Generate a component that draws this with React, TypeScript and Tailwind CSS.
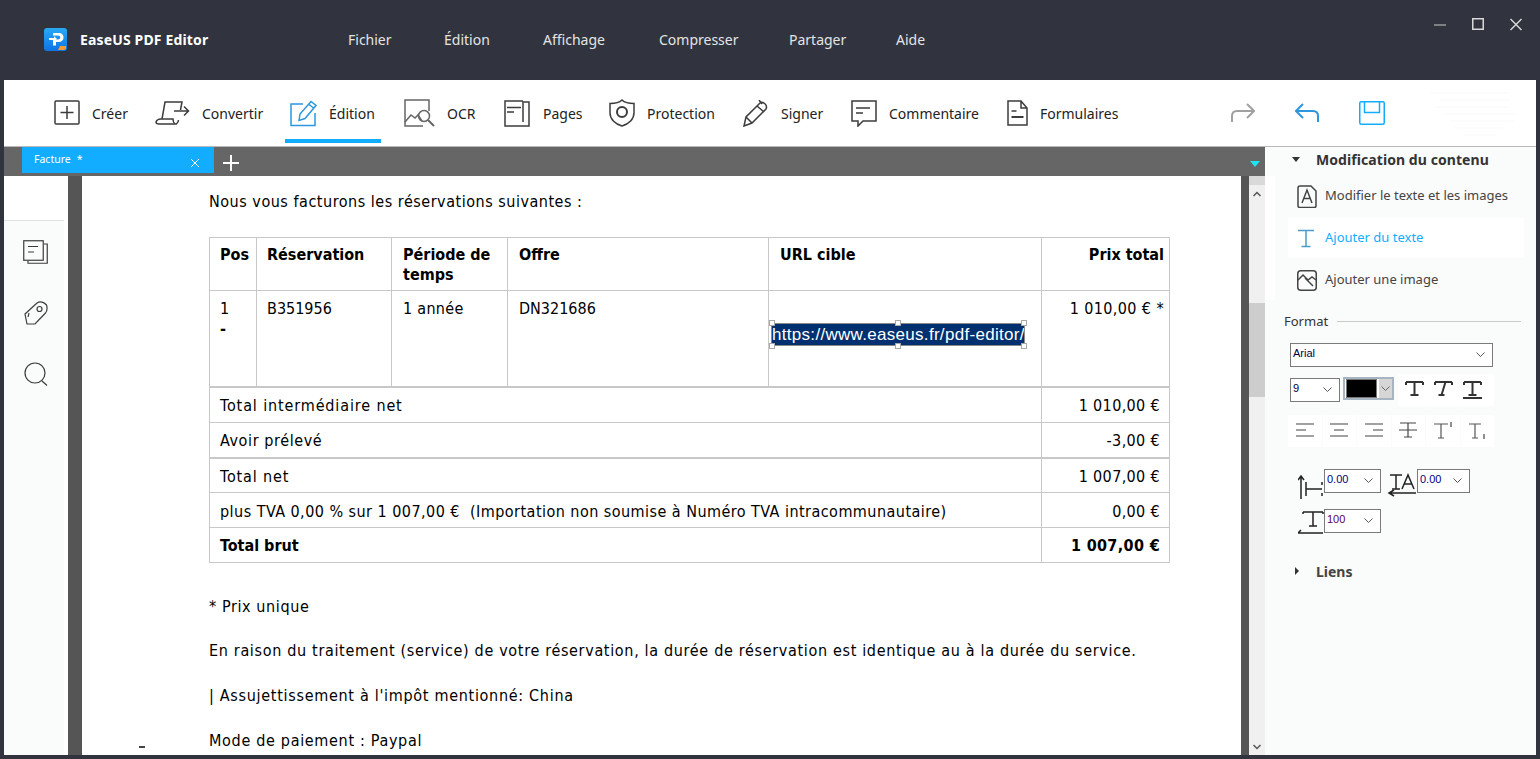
import type { ReactNode } from "react";

const ui = "font-['Noto_Sans','Open_Sans',sans-serif]";
const docFont = "font-['DejaVu_Sans_Condensed','DejaVu_Sans',sans-serif]";

function Glyph({
  w,
  h,
  color = "#3c3c3c",
  width = 1.5,
  children,
}: {
  w: number;
  h: number;
  color?: string;
  width?: number;
  children: ReactNode;
}) {
  return (
    <svg
      width={w}
      height={h}
      viewBox={`0 0 ${w} ${h}`}
      fill="none"
      stroke={color}
      strokeWidth={width}
      className="block shrink-0"
    >
      {children}
    </svg>
  );
}

const toolbarItems = [
  {
    label: "Créer",
    textClass: "w-[35px]",
    icon: (
      <Glyph w={26} h={26}>
        <rect x="1" y="1" width="24" height="23" rx="1" />
        <path d="M13 6v13M6.5 12.5h13" />
      </Glyph>
    ),
  },
  {
    label: "Convertir",
    textClass: "w-[60px]",
    icon: (
      <Glyph w={35} h={26}>
        <path d="M7 19 10 2h17l-1.5 8M1 22c1-3 3-3 5-3h12c0 2 .5 4 2 5H4c-2 0-3-1-3-2ZM20 24c2 0 3-1 3.5-4" />
        <path d="M19 11h14M29 6.5l4.5 4.5-4.5 4.5" />
      </Glyph>
    ),
  },
  {
    label: "Édition",
    textClass: "w-[47px]",
    active: true,
    icon: (
      <Glyph w={27} h={28} color="#2c97de">
        <path d="M13 5H1v21.5h24V14" />
        <path d="M9 21.5 10 15 21 2.5 26 6.5 15 19.5ZM18.5 5l5 4" />
      </Glyph>
    ),
  },
  {
    label: "OCR",
    textClass: "w-[29px]",
    icon: (
      <Glyph w={31} h={29} color="#666666">
        <path d="M19 27H1V1h24v11" />
        <path d="M1 23 7 16l4 3 3-3 4 6" />
        <circle cx="20" cy="17" r="5.5" />
        <path d="m24 21 6 6" strokeWidth="2" />
      </Glyph>
    ),
  },
  {
    label: "Pages",
    textClass: "w-[38px]",
    icon: (
      <Glyph w={27} h={27}>
        <path d="M19 1H1v25h24V2h-6v20" />
        <path d="M3 7.5h14M3 12h7" />
      </Glyph>
    ),
  },
  {
    label: "Protection",
    textClass: "w-[68px]",
    icon: (
      <Glyph w={26} h={28}>
        <path d="M13 1c3 3 7 3.500 12 3.500V14c0 6-5 11-12 13C6 25 1 20 1 14V4.500C6 4.500 10 4 13 1Z" />
        <circle cx="13" cy="13" r="5" strokeWidth="2" />
      </Glyph>
    ),
  },
  {
    label: "Signer",
    textClass: "w-[42px]",
    icon: (
      <Glyph w={26} h={27}>
        <path d="M1 26 3 17 17 3c3-2 8 2 6 6L9 23Z" />
        <path d="M14 6l7 6M3 17l6 6M16 0l3 4" />
      </Glyph>
    ),
  },
  {
    label: "Commentaire",
    textClass: "w-[90px]",
    icon: (
      <Glyph w={26} h={27}>
        <path d="M1 1h24v20H12l-5 5v-5H1Z" />
        <path d="M5 8h14M5 13h7" />
      </Glyph>
    ),
  },
  {
    label: "Formulaires",
    textClass: "w-[77px]",
    icon: (
      <Glyph w={21} h={26}>
        <path d="M1 1h13l6 7v17H1ZM14 1v7h6" />
        <path d="M4.500 11h5" />
        <path d="M4.500 17h12" strokeWidth="2" />
      </Glyph>
    ),
  },
];

function ToolbarButton({
  label,
  icon,
  textClass,
  active,
}: {
  label: string;
  icon: ReactNode;
  textClass: string;
  active?: boolean;
}) {
  return (
    <div
      className={`flex items-center gap-3 px-[5px] pt-[7px] h-[63px] border-b-4 ${
        active ? "border-[#13adff]" : "border-transparent"
      }`}
    >
      {icon}
      <span className={`${textClass} whitespace-nowrap text-[14px] text-[#222]`}>
        {label}
      </span>
    </div>
  );
}

const menuItems = [
  { label: "Fichier", width: "w-[96px]" },
  { label: "Édition", width: "w-[99px]" },
  { label: "Affichage", width: "w-[116px]" },
  { label: "Compresser", width: "w-[130px]" },
  { label: "Partager", width: "w-[107px]" },
  { label: "Aide", width: "w-[30px]" },
];

function TitleBar() {
  return (
    <header className="h-20 shrink-0 flex items-start">
      <div className="ml-10 mt-7 flex items-center w-[304px]">
        <svg width="23" height="23" viewBox="0 0 23 23" className="block shrink-0">
          <defs>
            <linearGradient id="logoBlue" x1="0" y1="0" x2="0" y2="1">
              <stop offset="0" stopColor="#29a9f4" />
              <stop offset="1" stopColor="#0d74e4" />
            </linearGradient>
          </defs>
          <rect width="23" height="23" rx="3" fill="url(#logoBlue)" />
          <path
            d="M9 5h5.500c3.500 0 5 2 5 4.500S17.500 14 14.500 14H12v3.500H9v-6h5c1.500 0 2.300-.8 2.300-2s-.8-2-2.300-2H9Z"
            fill="#fff"
          />
          <path d="M5 10h5V8l3 3-3 3v-2H5Z" fill="#fff" />
          <path d="M14 22l2-4h6v2c0 1-1 2-2 2Z" fill="#f59a35" />
        </svg>
        <span className="ml-[13px] text-[14px] tracking-[0.15px] font-bold text-white whitespace-nowrap">
          EaseUS PDF Editor
        </span>
      </div>
      <nav className="mt-[29px] flex text-[14px] leading-[21px] text-[#e4e4e4]">
        {menuItems.map((m) => (
          <span key={m.label} className={`whitespace-nowrap ${m.width}`}>
            {m.label}
          </span>
        ))}
      </nav>
      <div className="ml-auto mr-[14px] mt-[18px] flex gap-[26px]">
        <Glyph w={12} h={13} color="#9a9a9a">
          <path d="M0 7h12" />
        </Glyph>
        <Glyph w={12} h={13} color="#d8d8d8">
          <rect x=".75" y=".75" width="10.500" height="10.500" />
        </Glyph>
        <Glyph w={12} h={13} color="#d8d8d8">
          <path d="M.5 1l11 11M11.500 1 .5 12" />
        </Glyph>
      </div>
    </header>
  );
}

function Toolbar() {
  return (
    <div className="h-[67px] shrink-0 border-b border-[#b9b9b9] bg-white flex items-start pl-[45px] pr-[17px]">
      <div className="flex gap-[18px]">
        {toolbarItems.map((item) => (
          <ToolbarButton key={item.label} {...item} />
        ))}
      </div>
      <div className="ml-auto mt-[21px] flex gap-[40px] items-start">
        <Glyph w={24} h={22} color="#a0a0a0" width={2}>
          <path d="M1 21v-6c0-3 2-5 5-5h16M16 3l7 7-7 7" />
        </Glyph>
        <Glyph w={24} h={22} color="#2c97de" width={2}>
          <path d="M23 21v-6c0-3-2-5-5-5H2M8 3 1 10l7 7" />
        </Glyph>
        <Glyph w={26} h={24} color="#13adff" width={1.5}>
          <rect x=".75" y=".75" width="24.500" height="22.500" rx="1.500" />
          <path d="M5.500 1v10.500h15V1" />
        </Glyph>
        <svg width="99" height="46" viewBox="0 0 99 46" className="-ml-[5px] -mt-[10px]" fill="none" stroke="#f9f9f9">
          <path d="M10 2h80M20 9h70M15 16h75M25 23h70M30 30h65M35 37h50M45 44h30" />
        </svg>
      </div>
    </div>
  );
}

function TabBar() {
  return (
    <div className="h-[29px] shrink-0 bg-[#666666] flex items-start pl-[18px] relative">
      <div
        className={`w-[192px] h-[26px] bg-[#13adff] flex items-center pl-3 pr-[14px] text-white text-[10.5px] ${ui}`}
      >
        <span>Facture</span>
        <span className="ml-[6px]">*</span>
        <svg width="10" height="10" viewBox="0 0 10 10" className="ml-auto mt-[5px]" stroke="#fff">
          <path d="M1 1l8 8M9 1 1 9" />
        </svg>
      </div>
      <svg width="16" height="16" viewBox="0 0 16 16" className="ml-[9px] mt-[8px]" stroke="#fff" strokeWidth="2">
        <path d="M8 0v16M0 8h16" />
      </svg>
      <span className="ml-auto mr-[5px] mt-[14px] w-0 h-0 border-x-[5px] border-x-transparent border-t-[6px] border-t-[#1ee5f5]" />
    </div>
  );
}

function LeftRail() {
  return (
    <aside className="w-[60px] shrink-0 flex flex-col">
      <div className="h-[45px] shrink-0 bg-white border-b border-[#e2e2e2]" />
      <div className="flex-1 bg-[#fafbfb] flex flex-col items-center gap-[37px] pt-[19px] pl-[3px]">
        <Glyph w={25} h={24} width={1.2}>
          <rect x=".75" y=".75" width="19.500" height="19.500" fill="#fafbfb" />
          <path d="M21 4h3.250v19.250H5V21M5 6.500h10M5 12h6" />
        </Glyph>
        <Glyph w={24} h={24} width={1.2}>
          <path d="M1 13 13 2c3-2 7-1 9.500 2 1 3 .5 6-1 8L11 23H3Z" />
          <circle cx="15.500" cy="8" r="2.500" />
          <path d="M5 12l-1 4" />
        </Glyph>
        <Glyph w={24} h={24} width={1.2}>
          <circle cx="11" cy="11" r="10" />
          <path d="m18 19 5 4.500" />
        </Glyph>
      </div>
    </aside>
  );
}

function Handle({ pos }: { pos: string }) {
  return (
    <span className={`absolute w-[6px] h-[6px] bg-white border border-[#a8a8a8] ${pos}`} />
  );
}

const summaryRows = [
  {
    label: "Total intermédiaire net",
    value: "1 010,00 €",
    rowClass: "h-[36px] [&>td]:border-t-2 [&>td]:pt-[3px]",
    spacing: "tracking-[0.87px]",
  },
  {
    label: "Avoir prélevé",
    value: "-3,00 €",
    rowClass: "h-[35px] [&>td]:pt-[2px]",
    spacing: "tracking-[0.6px]",
  },
  {
    label: "Total net",
    value: "1 007,00 €",
    rowClass: "h-[35px] [&>td]:border-t-2 [&>td]:pt-[3px]",
    spacing: "tracking-[0.85px]",
  },
  {
    label: "plus TVA 0,00 % sur 1 007,00 €  (Importation non soumise à Numéro TVA intracommunautaire)",
    value: "0,00 €",
    rowClass: "h-[35px] [&>td]:pt-[3px]",
    spacing: "tracking-[0.46px]",
  },
  {
    label: "Total brut",
    value: "1 007,00 €",
    rowClass: "h-[35px] font-bold [&>td]:pt-[1px]",
    spacing: "",
  },
];

function InvoiceTable() {
  const cell = "border border-[#c8c8c8] align-top px-[10px]";
  const shifted = "border border-[#c8c8c8] align-top pl-[11px] pr-[8px]";
  const sum = "border border-[#c8c8c8] align-middle whitespace-pre";
  return (
    <table className="table-fixed border-collapse w-[960px] mt-[25px] text-[16px] leading-[20px]">
      <colgroup>
        <col className="w-[47px]" />
        <col className="w-[135px]" />
        <col className="w-[116px]" />
        <col className="w-[261px]" />
        <col className="w-[273px]" />
        <col className="w-[128px]" />
      </colgroup>
      <tbody>
        <tr className="h-[53px] font-bold [&>td]:pt-[7px]">
          <td className={cell}>Pos</td>
          <td className={cell}>Réservation</td>
          <td className={shifted}>Période de temps</td>
          <td className={shifted}>Offre</td>
          <td className={shifted}>URL cible</td>
          <td className={`${cell} text-right !pr-[5px]`}>Prix total</td>
        </tr>
        <tr className="h-[96px] [&>td]:pt-[8px]">
          <td className={cell}>
            1
            <br />
            <span className="font-bold">-</span>
          </td>
          <td className={cell}>B351956</td>
          <td className={`${shifted} tracking-[0.3px]`}>1 année</td>
          <td className={shifted}>DN321686</td>
          <td className="border border-[#c8c8c8] align-top">
            <div className="relative mt-[25px] ml-[3px] w-[252px] h-[21px] bg-[#003070] outline outline-[#8a8a8a] text-white text-[17px] tracking-[0.3px] leading-[21px] font-['Liberation_Sans',Arial,sans-serif] whitespace-nowrap">
              https://www.easeus.fr/pdf-editor/
              <Handle pos="-left-[3px] -top-[4px]" />
              <Handle pos="left-[123px] -top-[4px]" />
              <Handle pos="-right-[3px] -top-[4px]" />
              <Handle pos="-left-[3px] -bottom-[4px]" />
              <Handle pos="left-[123px] -bottom-[4px]" />
              <Handle pos="-right-[3px] -bottom-[4px]" />
            </div>
          </td>
          <td className={`${cell} text-right !pr-[5px] tracking-[0.4px]`}>1 010,00 € *</td>
        </tr>
        {summaryRows.map((row) => (
          <tr key={row.label} className={row.rowClass}>
            <td colSpan={5} className={`${sum} pl-[10px] ${row.spacing}`}>
              {row.label}
            </td>
            <td className={`${sum} text-right pr-[9px] tracking-[0.35px]`}>{row.value}</td>
          </tr>
        ))}
      </tbody>
    </table>
  );
}

function DocumentPage() {
  return (
    <div
      className={`relative w-[1159px] shrink-0 bg-white overflow-hidden pl-[127px] pt-[16px] text-[16px] leading-[20px] text-black ${docFont}`}
    >
      <p className="tracking-[0.52px]">Nous vous facturons les réservations suivantes :</p>
      <InvoiceTable />
      <p className="mt-[34px] tracking-[0.6px]">* Prix unique</p>
      <p className="mt-[24px] whitespace-nowrap tracking-[0.67px]">
        En raison du traitement (service) de votre réservation, la durée de réservation est identique au à la durée du service.
      </p>
      <p className="mt-[25px] tracking-[0.7px]">| Assujettissement à l'impôt mentionné: China</p>
      <p className="mt-[25px] tracking-[0.68px]">Mode de paiement : Paypal</p>
      <span className="absolute left-[57px] bottom-[7px] w-[6px] h-[2px] bg-[#444]" />
    </div>
  );
}

function Scrollbar() {
  return (
    <div className="w-4 shrink-0 bg-[#f0f0f0] flex flex-col items-center">
      <div className="w-full h-[9px] bg-[#d9d9d9]" />
      <svg width="8" height="6" viewBox="0 0 8 6" className="mt-[6px]" fill="none" stroke="#555" strokeWidth="1.500">
        <path d="M.5 5 4 1.500 7.500 5" />
      </svg>
      <div className="w-full h-[94px] mt-[106px] bg-[#cdcdcd]" />
      <svg width="8" height="6" viewBox="0 0 8 6" className="mt-auto mb-[5px]" fill="none" stroke="#555" strokeWidth="1.500">
        <path d="M.5 1 4 4.500 7.500 1" />
      </svg>
    </div>
  );
}

function Caret({ color = "#555" }: { color?: string }) {
  return (
    <svg width="9" height="5" viewBox="0 0 9 5" className="shrink-0" fill="none" stroke={color}>
      <path d="M.5.5l4 4 4-4" />
    </svg>
  );
}

function SelectBox({
  value,
  className,
  textClass = "text-[#000080]",
}: {
  value: string;
  className: string;
  textClass?: string;
}) {
  return (
    <div
      className={`h-[24px] bg-white border border-[#7a7a7a] flex items-center pl-[2px] pr-[7px] justify-between text-[11px] font-['Liberation_Sans',Arial,sans-serif] shrink-0 ${className}`}
    >
      <span className={`-mt-[3px] ${textClass}`}>{value}</span>
      <Caret />
    </div>
  );
}

function PanelItem({
  icon,
  label,
  active,
}: {
  icon: ReactNode;
  label: string;
  active?: boolean;
}) {
  return (
    <div
      className={`h-[40px] w-[236px] flex items-center ${active ? "bg-white text-[#13adff]" : "text-[#444]"}`}
    >
      <span className="w-[37px] pl-[9px] shrink-0">{icon}</span>
      <span className="text-[13px] whitespace-nowrap">{label}</span>
    </div>
  );
}

function SerifT({ x = 0, w = 17, slant = false, under = false }: { x?: number; w?: number; slant?: boolean; under?: boolean }) {
  return (
    <g transform={`translate(${x} 0)`}>
      <path d={`M1 2h${w}M1 2v3M${w + 1} 2v3`} />
      <path d={slant ? `M${w / 2 + 3} 2 ${w / 2 - 1} 15M${w / 2 - 4} 15h6` : `M${w / 2 + 1} 2v13M${w / 2 - 3} 15h8`} />
      {under && <path d={`M0 18h${w + 2}`} />}
    </g>
  );
}

const alignIcons = [
  <path key="a" d="M0 3h18M0 9h10M0 15h18" />,
  <path key="b" d="M0 3h18M4 9h10M0 15h18" />,
  <path key="c" d="M0 3h18M8 9h10M0 15h18" />,
  <g key="d">
    <path d="M1 2h16M9 2v14M5 16h8M0 9h18" />
  </g>,
  <g key="e">
    <path d="M0 3h14M7 3v14M4 17h6" stroke="#555" />
    <path d="M17 1v5" />
  </g>,
  <g key="f">
    <path d="M1 3h12M7 3v14M4 17h6" stroke="#555" />
    <path d="M16 13v5" />
  </g>,
];

function RightPanel() {
  return (
    <aside className={`flex-1 min-w-0 bg-[#fafbfb] flex flex-col ${ui}`}>
      <div className="h-[25px] flex items-center pl-[27px] shrink-0">
        <span className="w-0 h-0 border-x-[4px] border-x-transparent border-t-[5px] border-t-[#333]" />
        <span className="ml-[16px] text-[14px] tracking-[0.07px] font-bold text-[#333] whitespace-nowrap">
          Modification du contenu
        </span>
      </div>
      <div className="pl-[13px] flex flex-col mt-[4px] gap-[2px] border-l-[10px] border-white">
        <PanelItem
          label="Modifier le texte et les images"
          icon={
            <Glyph w={20} h={23} color="#444">
              <path d="M1 3c0-1 1-2 2-2h11l5 5v15c0 1-1 1.500-2 1.500H3c-1 0-2-.5-2-1.500Z" />
              <path d="M5 18 10 5l5 13M7 13.500h6" />
            </Glyph>
          }
        />
        <PanelItem
          active
          label="Ajouter du texte"
          icon={
            <Glyph w={18} h={19} color="#4a9cc9">
              <path d="M1 1.500h16M9 1.500v16M4.500 17.500h9" />
            </Glyph>
          }
        />
        <PanelItem
          label="Ajouter une image"
          icon={
            <Glyph w={20} h={21} color="#444">
              <rect x=".75" y=".75" width="18.500" height="19.500" rx="3" />
              <path d="M1 10l5-5 5 5 4-3 4 3M8 8l8 8" />
            </Glyph>
          }
        />
      </div>
      <div className="pl-[19px] mt-[12px] flex items-center gap-[9px]">
        <span className="text-[13px] text-[#333]">Format</span>
        <span className="w-[184px] h-px bg-[#c8cccc]" />
      </div>
      <div className="pl-[25px] mt-[11px] flex flex-col">
        <SelectBox value="Arial" className="w-[203px]" textClass="text-[#000040]" />
        <div className="flex items-start mt-[7px]">
          <SelectBox value="9" className="w-[50px] mt-[4px]" textClass="text-[#000040]" />
          <div className="ml-[3px] mt-[3px] w-[51px] h-[23px] border-2 border-[#a9b4c2] flex bg-white">
            <span className="w-[31px] bg-black border border-[#777] ml-px" />
            <span className="ml-auto w-[13px] bg-[#d6d6d6] flex items-center justify-center">
              <Caret color="#666" />
            </span>
          </div>
          <div className="ml-[4px] w-[96px] h-[32px] bg-white flex items-center">
            <svg width="96" height="20" viewBox="0 0 96 20" fill="none" stroke="#333" strokeWidth="2">
              <SerifT x={7} />
              <SerifT x={36} slant />
              <SerifT x={65} under />
            </svg>
          </div>
        </div>
        <div className="-ml-[2px] mt-[9px] flex gap-px w-[206px]">
          {alignIcons.map((icon, i) => (
            <div key={i} className="w-[34px] h-[32px] bg-white flex items-center justify-center">
              <svg width="18" height="19" viewBox="0 0 18 19" fill="none" stroke="#444" strokeWidth="1.200">
                {icon}
              </svg>
            </div>
          ))}
        </div>
        <div className="mt-[23px] flex items-start pl-[8px]">
          <svg width="26" height="26" viewBox="0 0 26 26" className="mt-[3px]" fill="none" stroke="#222" strokeWidth="1.500">
            <path d="M3 26V4M0 7l3-4 3 4M8 9v14M8 16h16M24 9v3M24 20v3" />
          </svg>
          <SelectBox value="0.00" className="w-[57px] -mt-[1px]" />
          <svg width="30" height="26" viewBox="0 0 30 26" className="ml-[6px] mt-[2px]" fill="none" stroke="#222" strokeWidth="1.500">
            <path d="M3 3h12M9 3v14M5 17h8M15 17 21 3l6 14M17 12h8" />
            <path d="M29 21H3M7 18l-5 3 5 3" />
          </svg>
          <SelectBox value="0.00" className="w-[53px] -mt-[1px]" />
        </div>
        <div className="mt-[10px] flex items-start pl-[8px]">
          <svg width="26" height="26" viewBox="0 0 26 26" fill="none" stroke="#222" strokeWidth="1.500">
            <path d="M5 3h20M5 3v2M25 3v2M15 3v14M11 17h8M0 24h25M3 21l-3 3 3 0" />
          </svg>
          <SelectBox value="100" className="w-[57px]" textClass="text-[#5a005a]" />
        </div>
      </div>
      <div className="pl-[30px] mt-[26px] flex items-center">
        <span className="w-0 h-0 border-y-[4px] border-y-transparent border-l-[4px] border-l-[#333]" />
        <span className="ml-[17px] text-[14px] font-bold text-[#444]">Liens</span>
      </div>
    </aside>
  );
}

export default function App() {
  return (
    <div className={`w-[1540px] h-[759px] overflow-hidden bg-[#31343e] flex flex-col px-[4px] pb-[4px] ${ui}`}>
      <TitleBar />
      <Toolbar />
      <main className="flex-1 min-h-0 flex bg-white">
        <section className="w-[1261px] shrink-0 flex flex-col min-h-0">
          <TabBar />
          <div className="flex-1 min-h-0 flex">
            <LeftRail />
            <div className="w-[4px] shrink-0 bg-white" />
            <div className="w-[14px] shrink-0 bg-[#555555]" />
            <DocumentPage />
            <div className="w-[8px] shrink-0 bg-[#555555]" />
            <Scrollbar />
          </div>
        </section>
        <RightPanel />
      </main>
    </div>
  );
}
